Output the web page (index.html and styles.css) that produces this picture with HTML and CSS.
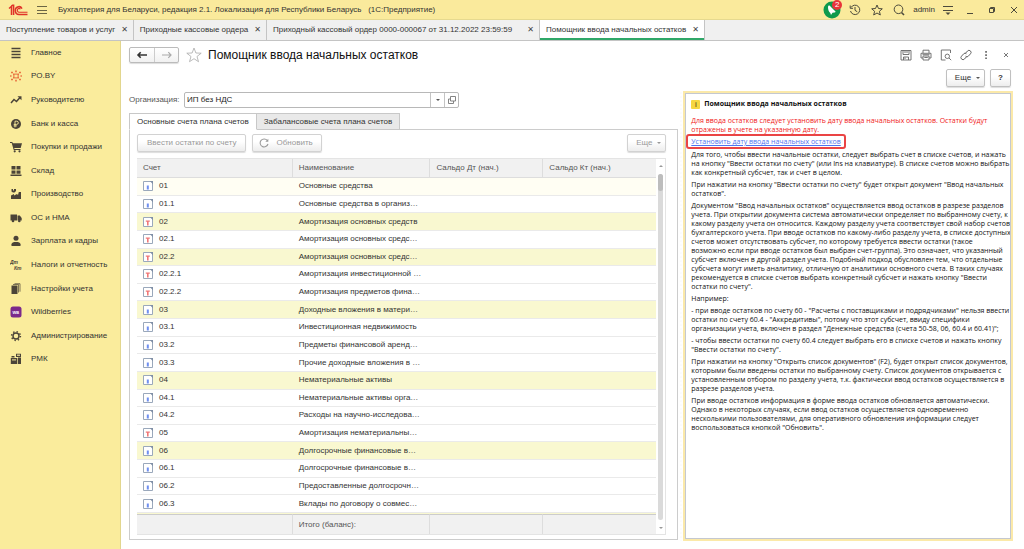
FILE: index.html
```html
<!DOCTYPE html>
<html lang="ru">
<head>
<meta charset="utf-8">
<title>Помощник ввода начальных остатков</title>
<link rel="stylesheet" href="styles.css">
</head>
<body>
<header class="topbar">
  <svg class="logo" viewBox="0 0 20 12" fill="none" stroke="#e03228" stroke-width="1.5"><path d="M1 4.5 3.5 2.3V11M5.6 11V1.2H4.6L3.4 2.2"/><path d="M14 4.6A3.6 3.9 0 1 0 11 10.5H19.5"/><path d="M12.4 5.2A1.7 1.9 0 1 0 11 8.2H19.5" stroke-width="1.1"/></svg>
  <button class="plain burger" aria-label="Меню"><svg viewBox="0 0 10 10" stroke="#6b6544" stroke-width="1"><path d="M0 1.5h10M0 5.5h10M0 8.5h10"/></svg></button>
  <span class="app-name">Бухгалтерия для Беларуси, редакция 2.1. Локализация для Республики Беларусь &nbsp; (1С:Предприятие)</span>
  <div class="top-actions">
    <button class="plain notify" aria-label="Уведомления"><svg viewBox="0 0 18 18"><circle cx="9" cy="9" r="8.5" fill="#0e9a4c"/><path d="M5 6c0-1 1-2 2-1l5 5c1 .5.5 1.500-.5 1.500l-2 .3-1.500 2.200-.7-2C5.500 10.500 5 8 5 6z" fill="#fff"/></svg><span class="badge">2</span></button>
    <button class="plain" aria-label="История"><svg viewBox="0 0 12 12" fill="none" stroke="#4c4a3c"><path d="M2 3.500A4.700 4.700 0 1 1 1.500 7M1.200 1.500v2.800h2.800M6 3v3.300l2.300 1.500"/></svg></button>
    <button class="plain" aria-label="Избранное"><svg viewBox="0 0 12 12" fill="none" stroke="#4c4a3c"><path d="M6 1l1.500 3.500 3.800.3-2.900 2.500.9 3.700L6 9l-3.300 2 .9-3.700L.7 4.800l3.800-.3z"/></svg></button>
    <button class="plain" aria-label="Поиск"><svg viewBox="0 0 12 12" fill="none" stroke="#4c4a3c"><circle cx="5.500" cy="5.300" r="4.300"/><path d="M8.500 8.500 11 11" stroke-width="1.600"/></svg></button>
    <span class="user">admin</span>
    <button class="plain" aria-label="Настройки"><svg viewBox="0 0 12 12"><path d="M1 2.500h10M1 6.500h10" stroke="#4c4a3c"/><path d="M3.500 8.500h5L6 11z" fill="#4c4a3c"/></svg></button>
    <button class="plain win" aria-label="Свернуть"><svg viewBox="0 0 12 12"><path d="M3 9.500h6" stroke="#4c4a3c"/></svg></button>
    <button class="plain win" aria-label="Развернуть"><svg viewBox="0 0 12 12" fill="none" stroke="#4c4a3c"><path d="M3.500 4.500h4v4h-4zM4.500 4.500v-1h4v4h-1"/></svg></button>
    <button class="plain win" aria-label="Закрыть"><svg viewBox="0 0 12 12" stroke="#4c4a3c"><path d="M3 3l6 6M9 3l-6 6"/></svg></button>
  </div>
</header>

<nav class="tabs">
  <div class="tab"><a href="#">Поступление товаров и услуг</a><button class="plain x" aria-label="Закрыть">✕</button></div>
  <div class="tab"><a href="#">Приходные кассовые ордера</a><button class="plain x" aria-label="Закрыть">✕</button></div>
  <div class="tab long"><a href="#">Приходный кассовый ордер 0000-000067 от 31.12.2022 23:59:59</a><button class="plain x" aria-label="Закрыть">✕</button></div>
  <div class="tab active"><a href="#">Помощник ввода начальных остатков</a><button class="plain x" aria-label="Закрыть">✕</button></div>
</nav>

<div class="body">
  <aside class="sidebar">
    <nav class="menu">
      <a href="#"><svg viewBox="0 0 12 12" stroke="#4b4438" stroke-width="1.300"><path d="M1.500 1.500h9M1.500 4.500h9M1.500 7.500h9M1.500 10.500h9"/></svg>Главное</a>
      <a href="#"><svg viewBox="0 0 12 12" fill="#e2431e"><path d="M5.400.4h1.200v1.800H5.400zM5.400 3.400h1.200v1.400H5.400zM5.400 7.200h1.200v1.400H5.400zM5.400 9.800h1.200v1.800H5.400zM0 5.400h1.600v1.200H0zM3 5.400h1.600v1.200H3zM7.400 5.400H9v1.200H7.400zM10.400 5.400H12v1.200h-1.600zM1.300 1.800h1.400v1.400H1.300zM3.300 3.600h1.300v1.300H3.300zM9.300 1.800h1.400v1.400H9.300zM7.400 3.600h1.300v1.300H7.400zM1.300 8.800h1.400v1.400H1.300zM3.300 7.100h1.300v1.300H3.300zM9.300 8.800h1.400v1.400H9.300zM7.400 7.100h1.300v1.300H7.400z"/></svg>PO.BY</a>
      <a href="#"><svg viewBox="0 0 12 12" fill="none" stroke="#4b4438" stroke-width="1.500"><path d="M1 9l3-3.500 2.500 2L10 3.500"/><path d="M7.500 2.300H11.500V6.300z" fill="#4b4438" stroke="none"/></svg>Руководителю</a>
      <a href="#"><svg viewBox="0 0 12 12"><circle cx="6" cy="6" r="5" fill="#4b4438"/><path d="M5 9.300V3.200h1.700a1.500 1.500 0 0 1 0 3.200H3.700M3.700 7.900h3.200" fill="none" stroke="#faec9c" stroke-width=".9"/></svg>Банк и касса</a>
      <a href="#"><svg viewBox="0 0 12 12" fill="#4b4438"><path d="M0 1h2.300l.5 1.200H12L10.700 7H4.200l.3 1h6v1H3.700L1.700 2H0z"/><circle cx="4.700" cy="10.300" r="1.100"/><circle cx="9.500" cy="10.300" r="1.100"/></svg>Покупки и продажи</a>
      <a href="#"><svg viewBox="0 0 12 12" fill="#4b4438"><path d="M1.500 1h4v3.600h-4zM6.500 1h4v3.600h-4zM1.500 5.500h4v3.300h-4zM6.500 5.500h4v3.300h-4zM.5 9.600h11V11H.5z"/></svg>Склад</a>
      <a href="#"><svg viewBox="0 0 12 12" fill="#4b4438"><path d="M1 11V7.500l3-1.500v1.500L7 6l1 1 .8-3h2.200v7zM1.500 1h1.500v1.500h1V1H6v2L4.500 4.500H3L1.500 3.500z"/></svg>Производство</a>
      <a href="#"><svg viewBox="0 0 12 12" fill="#4b4438"><path d="M.5 2.500H7V8.500H.5zM7.500 3.500h2.300L11.700 6v2.500H7.500z"/><circle cx="3" cy="9" r="1.300"/><circle cx="9.300" cy="9" r="1.300"/></svg>ОС и НМА</a>
      <a href="#"><svg viewBox="0 0 12 12" fill="#4b4438"><circle cx="6" cy="3.300" r="2.500"/><path d="M1.500 11V9.300C1.500 7.500 3.500 6.900 6 6.900s4.500.6 4.500 2.400V11z"/></svg>Зарплата и кадры</a>
      <a href="#"><svg viewBox="0 0 12 12" fill="#4b4438" class="dtkt"><text x="0" y="5">Дт</text><text x="4" y="11">Кт</text></svg>Налоги и отчетность</a>
      <a href="#"><svg viewBox="0 0 12 12"><path d="M1.500 2.500h6v8.500h-6z" fill="#4b4438"/><path d="M3 1.500h5.500v8M4.500.7H10v8" fill="none" stroke="#4b4438" stroke-width=".7"/></svg>Настройки учета</a>
      <a href="#"><svg viewBox="0 0 12 12" class="wb"><rect x=".5" y=".5" width="11" height="11" rx="2.500" fill="#7b2a8b"/><text x="2.500" y="7.500" fill="#fff">WB</text></svg>Wildberries</a>
      <a href="#"><svg viewBox="0 0 12 12" fill="none" stroke="#4b4438"><circle cx="6" cy="6" r="3" stroke-width="1.400"/><circle cx="6" cy="6" r="4.400" stroke-width="1.500" stroke-dasharray="1.400 2.056"/></svg>Администрирование</a>
      <a href="#"><svg viewBox="0 0 12 12" fill="#4b4438"><path d="M.8 5h6.500v6H.8zM1.500 3h3v1.500h-3zM6 .7h5v3.200H6zM8 4.500h3V11H8z"/><path d="M2 6.300h4v1.300H2zM7 1.600h3v1.300H7z" fill="#d8c98a"/></svg>РМК</a>
    </nav>
  </aside>

  <main class="main">
    <div class="head">
      <div class="history">
        <button aria-label="Назад"><svg viewBox="0 0 12 8" fill="none" stroke="#333" stroke-width="1.600"><path d="M2 4h9M4.700 1.200 2 4l2.700 2.800"/></svg></button><button aria-label="Вперед"><svg viewBox="0 0 12 8" fill="none" stroke="#aaa" stroke-width="1.200"><path d="M1 4h9M7.300 1.200 10 4 7.300 6.800"/></svg></button>
      </div>
      <button class="plain fav" aria-label="В избранное"><svg viewBox="0 0 16 16" fill="none" stroke="#aaa" stroke-width=".8"><path d="M8 1l1.900 5 5.300.2-4.200 3.300 1.500 5.200L8 11.700l-4.500 3L5 9.500.8 6.200 6.100 6z"/></svg></button>
      <h1>Помощник ввода начальных остатков</h1>
      <div class="tools">
        <button class="plain" aria-label="Сохранить"><svg viewBox="0 0 12 12" fill="none" stroke="#666" stroke-width=".9"><path d="M1 1.500h10v9.500H1zM3 1.500v4h6v-4M3.500 11V8h5v3M5 2v2M7 2v2M5 8.500v1.500"/></svg></button>
        <button class="plain" aria-label="Печать"><svg viewBox="0 0 12 12" fill="none" stroke="#666" stroke-width=".9"><path d="M3 4V1.200h6V4M3 9H1V4.300h10V9H9M3 7h6v4H3zM4.300 8.500h3.500M2.500 5.700h7"/></svg></button>
        <button class="plain" aria-label="Просмотр"><svg viewBox="0 0 12 12" fill="none" stroke="#666" stroke-width=".9"><path d="M5.500 11H1.300V1h9.200v3"/><circle cx="7.300" cy="7.300" r="2.200"/><path d="M9 9l2.200 2.200"/></svg></button>
        <button class="plain" aria-label="Ссылка"><svg viewBox="0 0 12 12" fill="none" stroke="#666"><path d="M5.300 4.500 7.500 2a2 2 0 0 1 3 2.800L8.300 7.200a1.800 1.800 0 0 1-2.700 0M6.700 7.500 4.500 10a2 2 0 0 1-3-2.800L3.700 4.800a1.800 1.800 0 0 1 2.700 0"/></svg></button>
        <button class="plain" aria-label="Еще действия"><svg viewBox="0 0 12 12" fill="#555"><path d="M5.300 2h1.500v1.700H5.300zM5.300 5.200h1.500v1.700H5.300zM5.300 8.400h1.500v1.700H5.300z"/></svg></button>
        <button class="plain" aria-label="Закрыть"><svg viewBox="0 0 12 12" stroke="#777"><path d="M4 4l4 4M8 4l-4 4"/></svg></button>
      </div>
    </div>
    <div class="commands">
      <button class="btn more">Еще<i class="caret"></i></button>
      <button class="btn help">?</button>
    </div>

    <div class="work">
      <section class="left">
        <div class="org">
          <label for="org">Организация:</label>
          <div class="combo">
            <input id="org" type="text" value="ИП без НДС">
            <button aria-label="Выбрать"><i class="caret"></i></button>
            <button aria-label="Открыть"><svg viewBox="0 0 8 8" fill="none" stroke="#777" stroke-width=".9"><path d="M2.500 .5h5v4.500h-5zM2.500 3h-2v4.500h5V5"/></svg></button>
          </div>
        </div>
        <div class="subtabs">
          <button class="subtab on">Основные счета плана счетов</button>
          <button class="subtab">Забалансовые счета плана счетов</button>
        </div>
        <div class="panel">
          <div class="bar">
            <button class="btn off" disabled>Ввести остатки по счету</button>
            <button class="btn off refresh" disabled><svg viewBox="0 0 10 10" fill="none" stroke="#999" stroke-width="1.100"><path d="M8.300 2.500A4 4 0 1 0 9 6"/><path d="M9.300.8v3H6.300z" fill="#999" stroke="none"/></svg>Обновить</button>
            <button class="btn off more" disabled>Еще<i class="caret"></i></button>
          </div>
          <div class="grid">
            <div class="scroll">
              <table>
                <colgroup><col class="c1"><col class="c2"><col class="c3"><col class="c3"></colgroup>
                <thead><tr><th>Счет</th><th>Наименование</th><th>Сальдо Дт (нач.)</th><th>Сальдо Кт (нач.)</th></tr></thead>
                <tbody id="rows"></tbody>
                <tfoot><tr><td></td><td>Итого (баланс):</td><td></td><td></td></tr></tfoot>
              </table>
            </div>
            <div class="vbar"><i class="up"></i><div class="track"><div class="thumb"></div></div><i class="down"></i></div>
          </div>
        </div>
      </section>

      <div class="splitter"></div>

      <article class="info">
        <div class="info-body">
          <h2><span class="mark">i</span>Помощник ввода начальных остатков</h2>
          <p class="red">Для ввода остатков следует установить дату ввода начальных остатков. Остатки будут<br>отражены в учете на указанную дату.</p>
          <p class="linkline"><a href="#">Установить дату ввода начальных остатков</a></p>
          <p>Для того, чтобы ввести начальные остатки, следует выбрать счет в списке счетов, и нажать<br>на кнопку "Ввести остатки по счету" (или Ins на клавиатуре). В списке счетов можно выбрать<br>как конкретный субсчет, так и счет в целом.</p>
          <p>При нажатии на кнопку "Ввести остатки по счету" будет открыт документ "Ввод начальных<br>остатков".</p>
          <p>Документом "Ввод начальных остатков" осуществляется ввод остатков в разрезе разделов<br>учета. При открытии документа система автоматически определяет по выбранному счету, к<br>какому разделу учета он относится. Каждому разделу учета соответствует свой набор счетов<br>бухгалтерского учета. При вводе остатков по какому-либо разделу учета, в списке доступных<br>счетов может отсутствовать субсчет, по которому требуется ввести остатки (такое<br>возможно если при вводе остатков был выбран счет-группа). Это означает, что указанный<br>субсчет включен в другой раздел учета. Подобный подход обусловлен тем, что отдельные<br>субсчета могут иметь аналитику, отличную от аналитики основного счета. В таких случаях<br>рекомендуется в списке счетов выбрать конкретный субсчет и нажать кнопку "Ввести<br>остатки по счету".</p>
          <p>Например:</p>
          <p>- при вводе остатков по счету 60 - "Расчеты с поставщиками и подрядчиками" нельзя ввести<br>остатки по счету 60.4 - "Аккредитивы", потому что этот субсчет, ввиду специфики<br>организации учета, включен в раздел "Денежные средства (счета 50-58, 06, 60.4 и 60.41)";</p>
          <p>- чтобы ввести остатки по счету 60.4 следует выбрать его в списке счетов и нажать кнопку<br>"Ввести остатки по счету".</p>
          <p>При нажатии на кнопку "Открыть список документов" (F2), будет открыт список документов,<br>которыми были введены остатки по выбранному счету. Список документов открывается с<br>установленным отбором по разделу учета, т.к. фактически ввод остатков осуществляется в<br>разрезе разделов учета.</p>
          <p>При вводе остатков информация в форме ввода остатков обновляется автоматически.<br>Однако в некоторых случаях, если ввод остатков осуществляется одновременно<br>несколькими пользователями, для оперативного обновления информации следует<br>воспользоваться кнопкой "Обновить".</p>
        </div>
      </article>
    </div>
  </main>
</div>
<script src="rows.js"></script>
</body>
</html>
```
FILE: styles.css
```css
* { box-sizing: border-box; }
body {
  margin: 0;
  height: 100vh;
  display: flex;
  flex-direction: column;
  overflow: hidden;
  font: 8px/12px "Liberation Sans", Arial, sans-serif;
  color: #333;
  background: #fff;
}
button, input { font: inherit; color: inherit; margin: 0; }
a { color: inherit; text-decoration: none; }
svg { display: block; flex: none; }
.plain { border: 0; background: none; padding: 0; }

.topbar {
  display: flex;
  align-items: center;
  height: 20px;
  flex: none;
  padding: 0 4px 0 8px;
  background: #faea9c;
  border-bottom: 1px solid #e6d98f;
}
.logo { width: 20px; height: 12px; }
.burger { margin: 0 11px 0 9px; }
.burger svg { width: 10px; height: 10px; }
.app-name { white-space: nowrap; }
.top-actions { display: flex; align-items: center; gap: 10px; margin-left: auto; }
.top-actions svg { width: 12px; height: 12px; }
.top-actions .notify { position: relative; margin-right: -2px; }
.top-actions .notify svg { width: 18px; height: 18px; }
.user { margin: 0 -3px 0 -2px; }
.badge {
  position: absolute;
  top: -1px;
  right: -1px;
  width: 10px;
  height: 10px;
  border-radius: 5px;
  background: #e8343a;
  color: #fff;
  font-size: 8px;
  line-height: 10px;
}

.tabs {
  display: flex;
  height: 21px;
  flex: none;
  background: #f0f0f0;
  border-bottom: 1px solid #c4c4c4;
}
.tab {
  display: flex;
  align-items: center;
  justify-content: space-between;
  gap: 6px;
  padding: 0 5px 0 6px;
  border-right: 1px solid #c4c4c4;
  white-space: nowrap;
}
.tab.long { min-width: 273px; }
.tab .x { font: bold 8px/10px "DejaVu Sans", sans-serif; color: #444; }
.tab.active { background: #fff; box-shadow: inset 0 -2px #2fa768; }

.body { flex: 1; display: flex; min-height: 0; }
.sidebar { width: 121px; flex: none; background: #faec9c; border-right: 1px solid #e2d68e; }
.menu { height: 65%; display: grid; grid-auto-rows: 1fr; }
.menu a { display: flex; align-items: center; gap: 9px; padding-left: 10px; white-space: nowrap; }
.menu svg { width: 12px; height: 12px; }
.dtkt text { font: bold italic 5px "Liberation Sans", sans-serif; }
.wb text { font: bold 4px "Liberation Sans", sans-serif; }

.main { flex: 1; min-width: 0; display: flex; flex-direction: column; padding: 5px 11px 8px 8px; }
.head { display: flex; align-items: center; height: 18px; flex: none; }
.history {
  display: flex;
  border: 1px solid #bbb;
  border-radius: 2px;
  background: linear-gradient(#fff, #f1f1f1);
  box-shadow: 0 1px 1px #ddd;
}
.history button { width: 24px; height: 14px; border: 0; background: none; display: grid; place-items: center; padding: 0; }
.history button + button { border-left: 1px solid #ccc; }
.history svg { width: 12px; height: 8px; }
.fav { margin: 0 6px 0 7px; }
.fav svg { width: 16px; height: 16px; }
h1 { margin: 0; font-size: 12px; line-height: 16px; font-weight: normal; color: #111; white-space: nowrap; }
.tools { display: flex; gap: 8px; margin: 0 1px 0 auto; }
.tools svg { width: 12px; height: 12px; }

.commands { display: flex; justify-content: flex-end; gap: 5px; margin: 5px 2px 0 0; flex: none; }
.btn {
  display: flex;
  align-items: center;
  justify-content: center;
  height: 18px;
  padding: 0 9px;
  border: 1px solid #c0c0c0;
  border-radius: 2px;
  background: linear-gradient(#fff 40%, #ededed);
  box-shadow: 0 1px 1px #ddd;
  white-space: nowrap;
}
.more { width: 39px; gap: 5px; padding: 0 0 0 4px; }
.help { width: 21px; padding: 0; font-weight: bold; }
.caret { border: 2px solid transparent; border-top-color: #555; border-bottom: 0; }
.off { color: #999; border-color: #d2d2d2; }
.off .caret { border-top-color: #999; }

.work { flex: 1; min-height: 0; display: flex; margin-top: 4px; }
.left { flex: 1; min-width: 0; display: flex; flex-direction: column; padding: 1px 0 1px; }
.org { display: flex; align-items: center; gap: 3px; height: 16px; flex: none; color: #555; }
.org label { width: 52px; white-space: nowrap; }
.combo { display: flex; width: 275px; height: 16px; border: 1px solid #b8b8b8; border-radius: 2px; color: #222; }
.combo input { flex: 1; min-width: 0; border: 0; padding: 0 2px; background: none; }
.combo button { width: 14px; padding: 0; border: 0; border-left: 1px solid #c4c4c4; background: none; display: grid; place-items: center; }
.combo svg { width: 8px; height: 8px; }

.subtabs { display: flex; margin-top: 5px; flex: none; }
.subtab {
  height: 17px;
  padding: 0 7px;
  border: 1px solid #c8c8c8;
  border-left: 0;
  background: #e9e9e9;
  white-space: nowrap;
}
.subtab.on { background: #fff; border-left: 1px solid #c8c8c8; border-bottom-color: #fff; }
.subtabs::after { content: ""; flex: 1; border-bottom: 1px solid #ccc; }
.panel {
  flex: 1;
  min-height: 0;
  display: flex;
  flex-direction: column;
  padding: 4px 11px 4px 7px;
  border: 1px solid #ccc;
  border-top: 0;
}
.bar { display: flex; gap: 6px; flex: none; margin-bottom: 6px; }
.bar .more { margin-left: auto; }
.refresh { gap: 7px; padding: 0 8px 0 6px; }
.refresh svg { width: 10px; height: 10px; }

.grid { flex: 1; min-height: 0; display: flex; border: 1px solid #e4e4e4; border-width: 1px 1px 1px 0; }
.scroll { flex: 1; min-width: 0; overflow: hidden; }
table { width: 100%; height: 104.4%; table-layout: fixed; border-collapse: separate; border-spacing: 0; }
.c1 { width: 30%; }
.c2 { width: 26.5%; }
.c3 { width: 21.75%; }
th, td { padding: 0 0 0 6px; font-weight: normal; text-align: left; line-height: 12px; white-space: nowrap; }
thead th { position: sticky; top: 0; height: 19px; background: #f1f1f1; border-right: 1px solid #ddd; border-bottom: 1px solid #ddd; color: #555; }
tfoot td { position: sticky; bottom: 0; height: 20px; background: #f1f1f1; border-right: 1px solid #ddd; border-top: 1px solid #ccc; color: #555; }
th:last-child, tfoot td:last-child { border-right: 0; }
tbody td { height: 17px; border-bottom: 1px solid #eaeaea; }
.folder td { background: #f9f8d0; }
.current td { background: #fffef3; }
.code { display: flex; align-items: center; gap: 6px; }
.code svg { width: 10px; height: 10px; }
.vbar { width: 9px; flex: none; display: flex; flex-direction: column; align-items: center; padding: 6px 0 5px; gap: 7px; }
.up { border: 2px solid transparent; border-top: 0; border-bottom-color: #999; }
.down { border: 2px solid transparent; border-bottom: 0; border-top-color: #999; }
.track { flex: 1; width: 5px; border-radius: 3px; background: #dadada; }
.thumb { height: 5%; border-radius: 3px; background: #bdbdbd; }

.splitter { width: 5px; flex: none; background: radial-gradient(#ddd 35%, transparent 40%) 2px 0 / 2px 4px repeat-y; }
.info { width: 37.3%; flex: none; border: 2px solid #fbe9a9; }
.info-body {
  height: 100%;
  padding: 5px 0 0 5px;
  border: 1px solid #c4c8d0;
  font-family: "Open Sans", "Noto Sans", sans-serif;
  font-size: 7px;
  line-height: 9px;
  color: #111;
  white-space: nowrap;
  overflow: hidden;
}
h2 { display: flex; align-items: center; gap: 4px; margin: 0 0 7px; font-size: 7px; line-height: 10px; }
.mark { width: 9px; height: 9px; border-radius: 1px; background: #f6d73f; text-align: center; font-size: 7px; line-height: 9px; font-weight: normal; }
.info p { margin: 0 0 3px; }
.info .red { color: #f01818; margin: 0; }
.info .linkline { margin: 0 0 1px -5px; }
.linkline a {
  display: block;
  width: max-content;
  padding: 1px 3px;
  border: 2px solid #ea4444;
  border-radius: 3px;
  color: #4f74f0;
  text-decoration: underline;
}
```
FILE: rows.js
```js
const accounts = [
  ["01", "Основные средства", "a", "current"],
  ["01.1", "Основные средства в организ…", "a", ""],
  ["02", "Амортизация основных средств", "p", "folder"],
  ["02.1", "Амортизация основных средс…", "p", ""],
  ["02.2", "Амортизация основных средс…", "p", "folder"],
  ["02.2.1", "Амортизация инвестиционной …", "p", ""],
  ["02.2.2", "Амортизация предметов фина…", "p", ""],
  ["03", "Доходные вложения в матери…", "a", "folder"],
  ["03.1", "Инвестиционная недвижимость", "a", ""],
  ["03.2", "Предметы финансовой аренд…", "a", ""],
  ["03.3", "Прочие доходные вложения в …", "a", ""],
  ["04", "Нематериальные активы", "a", "folder"],
  ["04.1", "Нематериальные активы орга…", "a", ""],
  ["04.2", "Расходы на научно-исследова…", "a", ""],
  ["05", "Амортизация нематериальны…", "p", ""],
  ["06", "Долгосрочные финансовые в…", "a", "folder"],
  ["06.1", "Долгосрочные финансовые в…", "a", ""],
  ["06.2", "Предоставленные долгосрочн…", "a", ""],
  ["06.3", "Вклады по договору о совмес…", "a", ""],
  ["", "", "", "folder"]
];

// Page glyph with a blue bar for active accounts and a red T for passive ones.
function icon(kind) {
  const mark = kind === "a"
    ? '<path d="M3.800 4.500h2v4h-2z" fill="#6f8ff0"/>'
    : '<path d="M2.800 3.500h4v1.300H5.600V8.500H4V4.800H2.800z" fill="#f07878"/>';
  return '<svg viewBox="0 0 10 10"><path d="M.5.5h9v9h-9z" fill="#fff" stroke="#9aa8bb"/><path d="M6.800 0H10v3.200z" fill="#7f8fa6"/>' + mark + '</svg>';
}

document.getElementById("rows").innerHTML = accounts.map(([code, name, kind, cls]) =>
  `<tr class="${cls}"><td>${code ? `<div class="code">${icon(kind)}${code}</div>` : "&nbsp;"}</td><td>${name}</td><td></td><td></td></tr>`
).join("");
```
